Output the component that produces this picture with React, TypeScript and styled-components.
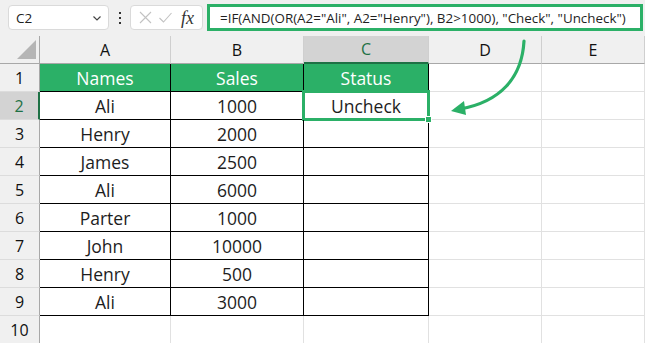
import React from "react";
import styled, { createGlobalStyle, css } from "styled-components";

const GREEN = "#2bb067";
const DARK_GREEN = "#1e7145";
const FONT = `"Open Sans", "Noto Sans", "Liberation Sans", sans-serif`;

const GlobalStyle = createGlobalStyle`
  html, body {
    margin: 0;
    padding: 0;
    background: #ffffff;
  }
  body {
    font-family: ${FONT};
    -webkit-font-smoothing: antialiased;
  }
  * {
    box-sizing: border-box;
  }
`;

const Sheet = styled.div`
  position: relative;
  width: 645px;
  height: 343px;
  overflow: hidden;
  background: #f0f0f0;
`;

/* ---------- formula bar ---------- */

const FormulaBar = styled.div`
  height: 36px;
  display: flex;
  align-items: center;
  padding: 0 2px 1px 8px;
`;

const NameBox = styled.div`
  width: 101px;
  height: 25px;
  display: flex;
  align-items: center;
  justify-content: space-between;
  padding: 0 6px 0 7px;
  background: #ffffff;
  border: 1px solid #dadada;
  border-radius: 4px;
  font-size: 13.5px;
  color: #222;
`;

const Chevron = styled.svg`
  width: 10px;
  height: 10px;
  color: #444;
`;

const Grip = styled.div`
  width: 21px;
  display: flex;
  flex-direction: column;
  align-items: center;
  gap: 3px;
`;

const GripDot = styled.span`
  width: 2px;
  height: 2px;
  background: #333;
`;

const ActionBox = styled.div`
  width: 73px;
  height: 25px;
  display: flex;
  align-items: center;
  gap: 7px;
  padding: 0 6px 0 8px;
  background: #ffffff;
  border: 1px solid #dadada;
  border-radius: 4px;
`;

const ActionIcon = styled.svg`
  width: 13px;
  height: 13px;
  color: #c2c2c2;
`;

const Fx = styled.span`
  margin-left: 2px;
  font-family: "Liberation Serif", "DejaVu Serif", serif;
  font-style: italic;
  font-size: 18px;
  color: #333;
  line-height: 1;
`;

const FormulaInput = styled.div`
  flex: 1;
  margin-left: 4px;
  height: 27px;
  display: flex;
  align-items: center;
  padding-left: 10px;
  background: #ffffff;
  border: 3px solid ${GREEN};
  font-size: 13.4px;
  color: #1f1f1f;
  white-space: nowrap;
`;

/* ---------- grid ---------- */

const Grid = styled.div`
  display: grid;
  grid-template-columns: 40px 131px 133px 125px 113px 1fr;
  grid-auto-rows: 28px;
  background: #ffffff;
`;

const Corner = styled.div`
  position: relative;
  background: #f0f0f0;
  border-right: 1px solid #a8a8a8;
  border-bottom: 1px solid #a8a8a8;

  &::before {
    content: "";
    position: absolute;
    left: 17px;
    top: 4px;
    width: 19px;
    height: 19px;
    background: #b5b5b5;
    clip-path: polygon(100% 0, 100% 100%, 0 100%);
  }
`;

const ColHead = styled.div<{ $active?: boolean }>`
  display: flex;
  align-items: center;
  justify-content: center;
  font-size: 16px;
  color: #111;
  background: #f0f0f0;
  border-right: 1px solid #cfcfcf;
  border-bottom: 1px solid #a8a8a8;

  ${(p) =>
    p.$active &&
    css`
      background: #d3d3d3;
      color: ${DARK_GREEN};
      border-bottom: 2px solid ${DARK_GREEN};
    `}
`;

const RowHead = styled.div<{ $active?: boolean }>`
  display: flex;
  align-items: center;
  justify-content: center;
  font-size: 16px;
  color: #111;
  background: #f0f0f0;
  border-right: 1px solid #a8a8a8;
  border-bottom: 1px solid #dcdcdc;

  ${(p) =>
    p.$active &&
    css`
      background: #d3d3d3;
      color: ${DARK_GREEN};
      border-right: 2px solid ${DARK_GREEN};
    `}
`;

type CellKind = "title" | "data" | "blank";

const Cell = styled.div<{ $kind: CellKind; $closedBelow?: boolean; $selected?: boolean }>`
  position: relative;
  display: flex;
  align-items: center;
  justify-content: center;
  font-size: 17.5px;
  color: #1d1d1d;
  border-right: 1px solid ${(p) => (p.$kind === "blank" ? "#e1e1e1" : "#000")};
  border-bottom: 1px solid
    ${(p) => (p.$kind === "blank" && !p.$closedBelow ? "#e1e1e1" : "#000")};

  ${(p) =>
    p.$kind === "title" &&
    css`
      background: ${GREEN};
      color: #ffffff;
    `}

  ${(p) =>
    p.$selected &&
    css`
      &::after {
        content: "";
        position: absolute;
        inset: -2px -2px -2px -2px;
        border: 3px solid ${GREEN};
        pointer-events: none;
      }
      &::before {
        content: "";
        position: absolute;
        right: -4px;
        bottom: -4px;
        width: 5px;
        height: 5px;
        background: ${GREEN};
        border: 1px solid #ffffff;
        z-index: 1;
      }
    `}
`;

const Pointer = styled.svg`
  position: absolute;
  left: 0;
  top: 0;
  width: 645px;
  height: 343px;
  pointer-events: none;
`;

const columns = ["A", "B", "C", "D", "E"];

const rows: [string, string, string][] = [
  ["Names", "Sales", "Status"],
  ["Ali", "1000", "Uncheck"],
  ["Henry", "2000", ""],
  ["James", "2500", ""],
  ["Ali", "6000", ""],
  ["Parter", "1000", ""],
  ["John", "10000", ""],
  ["Henry", "500", ""],
  ["Ali", "3000", ""],
];

export default function App() {
  return (
    <>
      <GlobalStyle />
      <Sheet>
        <FormulaBar>
          <NameBox>
            <span>C2</span>
            <Chevron viewBox="0 0 10 10">
              <path d="M1.5 3.5 L5 7 L8.5 3.5" fill="none" stroke="currentColor" strokeWidth="1.2" />
            </Chevron>
          </NameBox>
          <Grip>
            <GripDot />
            <GripDot />
            <GripDot />
          </Grip>
          <ActionBox>
            <ActionIcon viewBox="0 0 13 13">
              <path d="M1 1 L12 12 M12 1 L1 12" stroke="currentColor" strokeWidth="1.1" />
            </ActionIcon>
            <ActionIcon viewBox="0 0 13 13">
              <path d="M0.5 7 L4.5 11 L12.5 2" fill="none" stroke="currentColor" strokeWidth="1.1" />
            </ActionIcon>
            <Fx>fx</Fx>
          </ActionBox>
          <FormulaInput>
            =IF(AND(OR(A2="Ali", A2="Henry"), B2&gt;1000), "Check", "Uncheck")
          </FormulaInput>
        </FormulaBar>

        <Grid>
          <Corner />
          {columns.map((c) => (
            <ColHead key={c} $active={c === "C"}>
              {c}
            </ColHead>
          ))}

          {rows.map((r, i) => (
            <React.Fragment key={i}>
              <RowHead $active={i === 1}>{i + 1}</RowHead>
              {r.map((v, j) => (
                <Cell key={j} $kind={i === 0 ? "title" : "data"} $selected={i === 1 && j === 2}>
                  {v}
                </Cell>
              ))}
              <Cell $kind="blank" />
              <Cell $kind="blank" />
            </React.Fragment>
          ))}

          <RowHead>10</RowHead>
          {columns.map((c) => (
            <Cell key={c} $kind="blank" />
          ))}
        </Grid>

        <Pointer viewBox="0 0 645 343">
          <path
            d="M524 41 C522 78 500 102 460 109"
            fill="none"
            stroke={GREEN}
            strokeWidth="3.2"
            strokeLinecap="round"
          />
          <polygon points="451,111 464,101 466,115" fill={GREEN} />
        </Pointer>
      </Sheet>
    </>
  );
}
